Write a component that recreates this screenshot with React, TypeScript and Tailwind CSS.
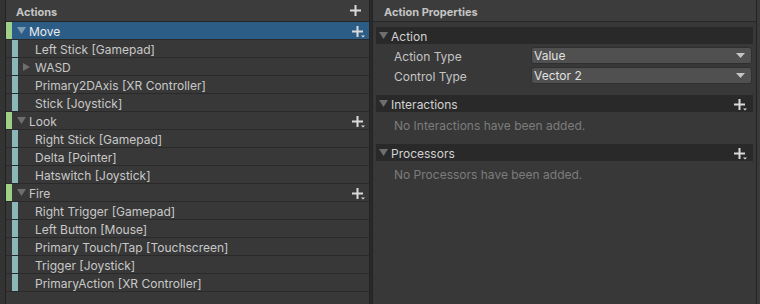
import React from "react";

type Row = { kind: "action" | "binding"; label: string; selected?: boolean; composite?: boolean };

const rows: Row[] = [
  { kind: "action", label: "Move", selected: true },
  { kind: "binding", label: "Left Stick [Gamepad]" },
  { kind: "binding", label: "WASD", composite: true },
  { kind: "binding", label: "Primary2DAxis [XR Controller]" },
  { kind: "binding", label: "Stick [Joystick]" },
  { kind: "action", label: "Look" },
  { kind: "binding", label: "Right Stick [Gamepad]" },
  { kind: "binding", label: "Delta [Pointer]" },
  { kind: "binding", label: "Hatswitch [Joystick]" },
  { kind: "action", label: "Fire" },
  { kind: "binding", label: "Right Trigger [Gamepad]" },
  { kind: "binding", label: "Left Button [Mouse]" },
  { kind: "binding", label: "Primary Touch/Tap [Touchscreen]" },
  { kind: "binding", label: "Trigger [Joystick]" },
  { kind: "binding", label: "PrimaryAction [XR Controller]" },
];

const Plus = ({ dropdown = false }: { dropdown?: boolean }) => (
  <svg width="13" height="12" viewBox="0 0 13 12" className="shrink-0">
    <rect x="4.5" y="0" width="2" height="11" fill="#dadada" />
    <rect x="0" y="4.5" width="11" height="2" fill="#dadada" />
    {dropdown && <path d="M9 9.5h4l-2 2z" fill="#dadada" />}
  </svg>
);

const Down = ({ color = "#6e6e6e" }: { color?: string }) => (
  <svg width="9" height="7" viewBox="0 0 9 7" className="shrink-0">
    <path d="M0 0h9l-4.5 7z" fill={color} />
  </svg>
);

const Right = () => (
  <svg width="7" height="8" viewBox="0 0 7 8" className="shrink-0">
    <path d="M0 0l7 4-7 4z" fill="#6e6e6e" />
  </svg>
);

const Caret = () => (
  <svg width="9" height="5" viewBox="0 0 9 5">
    <path d="M0 0h9l-4.5 5z" fill="#c4c4c4" />
  </svg>
);

const TreeRow = ({ row }: { row: Row }) => {
  if (row.kind === "action") {
    return (
      <div
        className={`flex h-[18px] items-center border-b border-[#2a2a2a] ${
          row.selected ? "bg-[#2c5d87] text-[#ececec]" : "text-[#c8c8c8]"
        }`}
      >
        <div className="h-full w-[6px] bg-[#9fcf89]" />
        <div className="ml-[5px] mr-[3px]">
          <Down color={row.selected ? "#7f9ab5" : "#6e6e6e"} />
        </div>
        <span className="flex-1 pt-[2px]">{row.label}</span>
        <div className="mr-[4px] mt-[2px]">
          <Plus dropdown />
        </div>
      </div>
    );
  }
  return (
    <div className="flex h-[18px] items-center border-b border-[#2a2a2a] text-[#c8c8c8]">
      <div className="h-full w-[6px]" />
      <div className="h-full w-[6px] bg-[#8ab8b8]" />
      {row.composite ? (
        <>
          <div className="ml-[5px] mr-[5px]">
            <Right />
          </div>
          <span className="pt-[2px]">{row.label}</span>
        </>
      ) : (
        <span className="ml-[17px] pt-[2px]">{row.label}</span>
      )}
    </div>
  );
};

const Section = ({ title, plus = false }: { title: string; plus?: boolean }) => (
  <div className="flex h-[17px] items-center bg-[#292929] pl-[3px] pr-[6px] text-[#d2d2d2]">
    <Down />
    <span className="ml-[3px] flex-1 pt-[2px]">{title}</span>
    {plus && (
      <div className="mt-[2px]">
        <Plus dropdown />
      </div>
    )}
  </div>
);

const Dropdown = ({ value }: { value: string }) => (
  <div className="flex h-[17px] w-[221px] items-center justify-between rounded-[3px] border border-[#2f2f2f] bg-[#505050] pl-[2px] pr-[6px] text-[#e0e0e0]">
    <span className="pt-[1px]">{value}</span>
    <Caret />
  </div>
);

export default function App() {
  return (
    <div
      className="flex h-[304px] w-[760px] overflow-hidden bg-[#2a2a2a] text-[12px] leading-none"
      style={{ fontFamily: "Inter, 'Noto Sans', sans-serif" }}
    >
      <div className="w-[5px] shrink-0 bg-[#333333]" />
      {/* actions tree */}
      <div className="flex w-[365px] shrink-0 flex-col border-x border-[#232323] bg-[#383838]">
        <div className="flex h-[22px] items-center justify-between border-b border-[#262626] bg-[#3c3c3c] pl-[10px] pr-[6px]">
          <span className="pt-[3px] text-[11px] font-bold text-[#c4c4c4]">Actions</span>
          <Plus />
        </div>
        {rows.map((r) => (
          <TreeRow key={r.label} row={r} />
        ))}
      </div>
      <div className="w-[2px] shrink-0" />
      {/* properties */}
      <div className="flex w-[385px] shrink-0 flex-col border-x border-[#232323] bg-[#383838]">
        <div className="flex h-[22px] items-center border-b border-[#262626] bg-[#3c3c3c] pl-[11px]">
          <span className="pt-[3px] text-[11px] font-bold text-[#c4c4c4]">Action Properties</span>
        </div>
        <div className="flex flex-col px-[3px] pt-[5px]">
          <Section title="Action" />
          <div className="mt-[3px] flex items-center pl-[18px] text-[#c4c4c4]">
            <span className="w-[137px] pt-[3px]">Action Type</span>
            <Dropdown value="Value" />
          </div>
          <div className="mt-[3px] flex items-center pl-[18px] text-[#c4c4c4]">
            <span className="w-[137px] pt-[3px]">Control Type</span>
            <Dropdown value="Vector 2" />
          </div>
          <div className="mt-[11px]">
            <Section title="Interactions" plus />
          </div>
          <div className="flex h-[26px] items-center pl-[18px] pt-[2px] text-[#7c7c7c]">
            No Interactions have been added.
          </div>
          <div className="mt-[6px]">
            <Section title="Processors" plus />
          </div>
          <div className="flex h-[26px] items-center pl-[18px] pt-[2px] text-[#7c7c7c]">
            No Processors have been added.
          </div>
        </div>
      </div>
      <div className="flex-1 bg-[#3a3a3a]" />
    </div>
  );
}
